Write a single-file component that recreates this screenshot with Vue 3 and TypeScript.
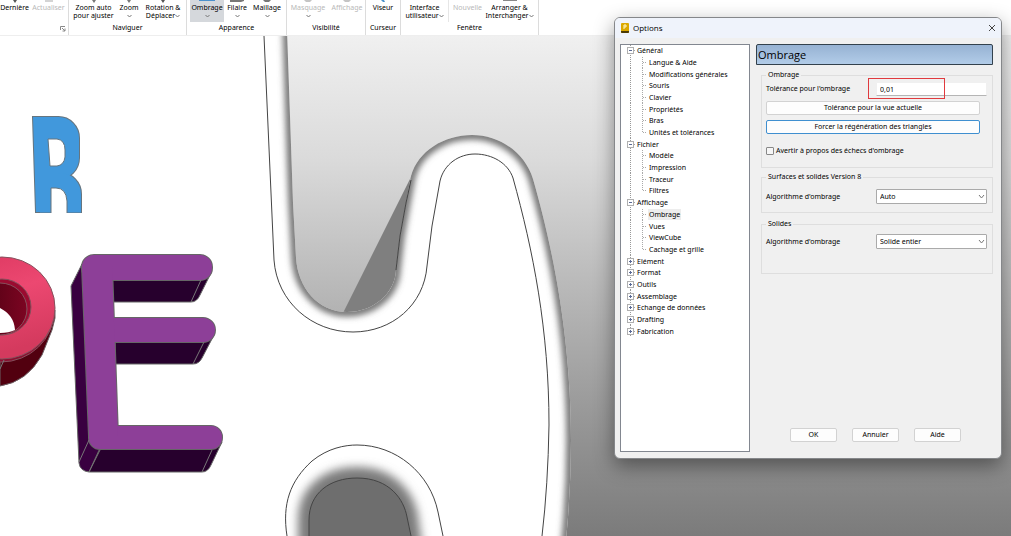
<script setup lang="ts">
import { ref } from 'vue'

interface Command {
  lines: string[]
  menu?: 'below' | 'inline'
  active?: boolean
  disabled?: boolean
  divider?: boolean
  icon: string
  tint: string
}
interface Group {
  id: string
  caption: string
  launcher?: boolean
  commands: Command[]
}
interface TreeNode {
  label: string
  child?: boolean
  open?: boolean
  last?: boolean
}

const arrow = 'M6 0h4l-2 3z'
const groups: Group[] = [
  {
    id: 'history', caption: '', launcher: true, commands: [
      { lines: ['Dernière'], icon: arrow, tint: '#555' },
      { lines: ['Actualiser'], disabled: true, icon: 'M4 0h8v2h-8z', tint: '#d4d4d4' },
    ],
  },
  {
    id: 'navigate', caption: 'Naviguer', commands: [
      { lines: ['Zoom auto', 'pour ajuster'], icon: arrow, tint: '#777' },
      { lines: ['Zoom'], menu: 'below', icon: arrow, tint: '#777' },
      { lines: ['Rotation &', 'Déplacer'], menu: 'inline', icon: arrow, tint: '#555' },
    ],
  },
  {
    id: 'look', caption: 'Apparence', commands: [
      { lines: ['Ombrage'], menu: 'below', active: true, icon: 'M0 0h16v1h-16z', tint: '#4b90cc' },
      { lines: ['Filaire'], menu: 'below', icon: 'M1 0h14v1l-3 1h-11z', tint: '#777' },
      { lines: ['Maillage'], menu: 'below', icon: 'M4 0h8l-2 2h-4z', tint: '#777' },
    ],
  },
  {
    id: 'visibility', caption: 'Visibilité', commands: [
      { lines: ['Masquage'], menu: 'below', disabled: true, icon: 'M4 0h8l-2 2h-4z', tint: '#c4c4c4' },
      { lines: ['Affichage'], disabled: true, icon: 'M4 0h8l-2 2h-4z', tint: '#c4c4c4' },
    ],
  },
  {
    id: 'cursor', caption: 'Curseur', commands: [
      { lines: ['Viseur'], icon: 'M6 0h3l1 2h-2z', tint: '#4b90cc' },
    ],
  },
  {
    id: 'window', caption: 'Fenêtre', commands: [
      { lines: ['Interface', 'utilisateur'], menu: 'inline', icon: '', tint: '#777' },
      { lines: ['Nouvelle'], disabled: true, divider: true, icon: '', tint: '#ccc' },
      { lines: ['Arranger &', 'Interchanger'], menu: 'inline', icon: 'M1 0h14v1h-14z', tint: '#888' },
    ],
  },
]

const tree: TreeNode[] = [
  { label: 'Général', open: true },
  { label: 'Langue & Aide', child: true },
  { label: 'Modifications générales', child: true },
  { label: 'Souris', child: true },
  { label: 'Clavier', child: true },
  { label: 'Propriétés', child: true },
  { label: 'Bras', child: true },
  { label: 'Unités et tolérances', child: true, last: true },
  { label: 'Fichier', open: true },
  { label: 'Modèle', child: true },
  { label: 'Impression', child: true },
  { label: 'Traceur', child: true },
  { label: 'Filtres', child: true, last: true },
  { label: 'Affichage', open: true },
  { label: 'Ombrage', child: true },
  { label: 'Vues', child: true },
  { label: 'ViewCube', child: true },
  { label: 'Cachage et grille', child: true, last: true },
  { label: 'Elément' },
  { label: 'Format' },
  { label: 'Outils' },
  { label: 'Assemblage' },
  { label: 'Echange de données' },
  { label: 'Drafting' },
  { label: 'Fabrication' },
]

const selected = ref('Ombrage')
const tolerance = ref('0,01')
const warn = ref(false)
const surfaceAlgo = ref('Auto')
const solidAlgo = ref('Solide entier')
</script>

<template>
  <div class="app">
    <header class="ribbon">
      <section v-for="g in groups" :key="g.id" class="group" :class="g.id">
        <div class="commands">
          <button
            v-for="c in g.commands"
            :key="c.lines[0]"
            type="button"
            class="command"
            :class="{ active: c.active, divider: c.divider }"
            :disabled="c.disabled"
          >
            <svg class="glyph" viewBox="0 0 16 4" aria-hidden="true"><path :d="c.icon" :fill="c.tint" /></svg>
            <span v-for="(line, i) in c.lines" :key="line" class="line">
              {{ line }}<svg v-if="c.menu === 'inline' && i === 1" class="chevron" viewBox="0 0 5 4"><path d="M.5 1l2 2 2-2" /></svg>
            </span>
            <svg v-if="c.menu === 'below'" class="chevron below" viewBox="0 0 5 4"><path d="M.5 1l2 2 2-2" /></svg>
          </button>
        </div>
        <div class="caption">
          <span>{{ g.caption }}</span>
          <svg v-if="g.launcher" class="launcher" viewBox="0 0 6 6"><path d="M.5 4V.5H5M2 2l3 3M5 2.500V5H2.500" /></svg>
        </div>
      </section>
    </header>

    <main class="view">
      <svg class="scene" viewBox="0 36 1011 500" preserveAspectRatio="xMinYMin slice" aria-hidden="true">
        <defs>
          <linearGradient id="sky" x1="0" y1="36" x2="0" y2="536" gradientUnits="userSpaceOnUse">
            <stop offset="0" stop-color="#f0f0f0" />
            <stop offset=".25" stop-color="#dadada" />
            <stop offset=".5" stop-color="#b9b9b9" />
            <stop offset=".75" stop-color="#999" />
            <stop offset="1" stop-color="#7b7b7b" />
          </linearGradient>
          <linearGradient id="pink" x1="0" y1="0" x2="0.300" y2="1">
            <stop offset="0" stop-color="#dc3860" />
            <stop offset=".45" stop-color="#ec4871" />
            <stop offset="1" stop-color="#d43a5e" />
          </linearGradient>
          <linearGradient id="maroon" x1="0" y1="0" x2="1" y2="0">
            <stop offset="0" stop-color="#4a0010" />
            <stop offset="1" stop-color="#7c0522" />
          </linearGradient>
          <filter id="soft" x="-20%" y="-20%" width="140%" height="140%"><feGaussianBlur stdDeviation="3" /></filter>
          <filter id="softer" x="-30%" y="-30%" width="160%" height="160%"><feGaussianBlur stdDeviation="5" /></filter>
          <clipPath id="solid">
            <path d="M0 30H287L290 116 293 203 296 258C298 288 318 312 347 312 374 312 395 293 396 270L400 236 406 203 411 176C418 151 444 135 472 135 500 135 525 153 533 179 550 238 571 330 571 440Q571 490 566 540H0z" />
          </clipPath>
          <clipPath id="baseline"><rect x="20" y="100" width="80" height="113" /></clipPath>
        </defs>

        <rect y="36" width="1011" height="500" fill="url(#sky)" />
        <path d="M343 313L411 177 406 215 400 250 396 280 380 305 350 318z" fill="#7f7f7f" />
        <g clip-path="url(#solid)">
          <rect y="30" width="600" height="510" fill="#fff" />
          <path
            d="M287 20L290 116 293 203 296 258C298 288 318 312 347 312 374 312 395 293 396 270L400 236 406 203 411 176C418 151 444 135 472 135 500 135 525 153 533 179 550 238 571 330 571 440Q571 500 564 560"
            fill="none" stroke="#6e6e6e" stroke-width="9" filter="url(#soft)"
          />
          <path d="M309 560V520C309 493 330 478 357 478 390 478 404 500 407 517L413 560z" fill="#707070" stroke="#7a7a7a" stroke-width="22" filter="url(#softer)" />
          <path d="M309 540V520C309 493 330 478 357 478 390 478 404 500 407 517L411 540z" fill="#6e6e6e" />
        </g>
        <g fill="none" stroke="#444" stroke-width="1">
          <path d="M264 36L274 260C277 302 312 332 353 332 392 332 424 305 427 266L432 226 440 181C444 164 459 154 475 154 492 154 508 163 513 178 533 250 549 330 549 425Q548 485 542 536" />
          <path d="M287 536C282 504 290 481 312 461 328 448 345 445 357 445 396 445 430 473 438 512L443 536" />
          <path d="M309 536V520C309 493 330 478 357 478 390 478 404 500 407 517L411 536" />
        </g>
        <path d="M396 270L400 236 406 203 411 180" fill="none" stroke="#444" />

        <!-- flat blue solid -->
        <g clip-path="url(#baseline)">
          <g fill="#4198dc" stroke="#66757f" stroke-width="2">
            <rect x="38" y="117" width="41" height="62" rx="21" />
            <rect x="40" y="173" width="41" height="70" rx="21" />
            <polygon points="33,117 58,117 52,212 36,212" />
          </g>
          <g fill="#4198dc">
            <rect x="38" y="117" width="41" height="62" rx="21" />
            <rect x="40" y="173" width="41" height="70" rx="21" />
            <polygon points="33,117 58,117 58,195 52,212 36,212" />
          </g>
          <path d="M48 139H57Q65 140 65 150V157Q64 165 57 166H50z" fill="#fff" stroke="#66757f" />
          <path d="M51 220V188H56Q66 188 67 201V220z" fill="#fff" stroke="#66757f" />
          <path d="M36 213H51M67 213H82" stroke="#66757f" />
        </g>

        <!-- red ring -->
        <path d="M0 350L55 310 55 318 52 330 42 355Q27 382 0 386z" fill="#52000f" stroke="#6b6064" />
        <ellipse cx="1" cy="311" rx="53" ry="51" fill="#8a1030" stroke="#85515d" />
        <ellipse cx="2" cy="308" rx="53" ry="51" fill="url(#pink)" stroke="#85515d" />
        <ellipse cx="2" cy="307" rx="29" ry="28" fill="#9b0b30" stroke="#85515d" />
        <ellipse cx="0" cy="309" rx="27" ry="26" fill="url(#maroon)" stroke="#85515d" />
        <path d="M0 308Q14 315 15 330Q9 333 0 333z" fill="#fff" />
        <path d="M4 360L0 369" stroke="#777" />

        <!-- extruded purple solid -->
        <g stroke="#666" stroke-width="1" stroke-linejoin="round">
          <path d="M82 264L71 286 79 463Q80 471 89 472L104 446z" fill="#390040" />
          <path d="M100 448L89 472H202Q208 472 211 465L222 442z" fill="#27002d" />
          <path d="M112 278V302H191Q197 302 200 295L211 273z" fill="#27002d" />
          <path d="M115 340V364H193Q199 364 202 358L214 335z" fill="#27002d" />
        </g>
        <g fill="#8d3f98" stroke="#666" stroke-width="2">
          <rect x="82" y="255" width="130" height="25" rx="12" />
          <rect x="90" y="318" width="125" height="24" rx="12" />
          <rect x="89" y="426" width="133" height="23" rx="11" />
          <polygon points="82,266 112,266 118,436 89,436" />
        </g>
        <g fill="#8d3f98">
          <rect x="82" y="255" width="130" height="25" rx="12" />
          <rect x="90" y="318" width="125" height="24" rx="12" />
          <rect x="89" y="426" width="133" height="23" rx="11" />
          <polygon points="82,266 112,266 118,436 89,436" />
        </g>
        <path d="M100 450L89 472M89 440L79 462M212 450L202 472M201 280L191 302M204 342L193 364" stroke="#777" fill="none" />
      </svg>
    </main>

    <div class="dialog" role="dialog" aria-labelledby="dialog-title">
      <div class="titlebar">
        <svg class="logo" viewBox="0 0 10 10" aria-hidden="true">
          <path d="M1 1q0-1 1-1h6q1 0 1 1v8q0 1-1 1H2q-1 0-1-1z" fill="#dba800" />
          <path d="M1 8h8v1q0 1-1 1H2q-1 0-1-1z" fill="#4c3a05" />
          <path d="M4 6V2h2v2H4" fill="none" stroke="#fff6c8" />
        </svg>
        <span id="dialog-title">Options</span>
        <button type="button" class="close" aria-label="Fermer">
          <svg viewBox="0 0 8 8"><path d="M1 1l6 6M7 1l-6 6" /></svg>
        </button>
      </div>
      <div class="body">
        <nav class="tree" aria-label="Catégories">
          <ul>
            <li v-for="n in tree" :key="n.label + n.child" :class="{ child: n.child, last: n.last }">
              <span class="trunk">
                <svg v-if="!n.child" class="toggle" viewBox="0 0 7 7">
                  <rect x=".5" y=".5" width="6" height="6" />
                  <path :d="n.open ? 'M2 3.500h3' : 'M2 3.500h3M3.500 2v3'" />
                </svg>
              </span>
              <span v-if="n.child" class="branch"></span>
              <button
                type="button"
                class="node"
                :class="{ selected: n.child && n.label === selected }"
                @click="selected = n.label"
              >{{ n.label }}</button>
            </li>
          </ul>
        </nav>
        <form class="panel" @submit.prevent>
          <h1>Ombrage</h1>
          <fieldset class="shading">
            <legend>Ombrage</legend>
            <div class="field">
              <label for="tolerance">Tolérance pour l'ombrage</label>
              <span class="control">
                <input id="tolerance" v-model="tolerance" type="text" />
                <span class="marker"></span>
              </span>
            </div>
            <button type="button" class="wide">Tolérance pour la vue actuelle</button>
            <button type="button" class="wide focus">Forcer la régénération des triangles</button>
            <label class="check"><input v-model="warn" type="checkbox" />Avertir à propos des échecs d'ombrage</label>
          </fieldset>
          <fieldset class="surfaces">
            <legend>Surfaces et solides Version 8</legend>
            <div class="field">
              <label for="surface-algo">Algorithme d'ombrage</label>
              <span class="control">
                <select id="surface-algo" v-model="surfaceAlgo"><option>Auto</option></select>
                <svg class="drop" viewBox="0 0 7 5"><path d="M1 1l2.500 3L6 1" /></svg>
              </span>
            </div>
          </fieldset>
          <fieldset class="solids">
            <legend>Solides</legend>
            <div class="field">
              <label for="solid-algo">Algorithme d'ombrage</label>
              <span class="control">
                <select id="solid-algo" v-model="solidAlgo"><option>Solide entier</option></select>
                <svg class="drop" viewBox="0 0 7 5"><path d="M1 1l2.500 3L6 1" /></svg>
              </span>
            </div>
          </fieldset>
          <div class="actions">
            <button type="submit">OK</button>
            <button type="button">Annuler</button>
            <button type="button">Aide</button>
          </div>
        </form>
      </div>
    </div>
  </div>
</template>

<style>
body { margin: 0; }
</style>

<style scoped>
* { box-sizing: border-box; }
.app {
  position: relative;
  display: flex;
  flex-direction: column;
  height: 100vh;
  overflow: hidden;
  background: #fff;
  color: #000;
  font-family: "Noto Sans", "Open Sans", sans-serif;
  font-size: 7px;
  line-height: 8px;
}
button, input, select { font: inherit; color: inherit; margin: 0; }
svg { display: block; }

.ribbon {
  display: flex;
  height: 36px;
  flex: none;
  background: #fff;
  border-bottom: 1px solid #eee;
}
.group {
  display: flex;
  flex-direction: column;
  border-right: 1px solid #dcdcdc;
}
.commands { display: grid; height: 22px; }
.history .commands { grid-template-columns: 29px 39px; }
.navigate .commands { grid-template-columns: 43px 28px 40px; padding: 0 3px; }
.look .commands { grid-template-columns: 34px 26px 34px; padding: 0 2px 0 3px; }
.visibility .commands { grid-template-columns: 42px 36px; }
.cursor .commands { grid-template-columns: 34px; }
.window .commands { grid-template-columns: 47px 38px 47px; padding-right: 5px; }
.command {
  display: flex;
  flex-direction: column;
  align-items: center;
  padding: 0;
  border: 0;
  background: none;
  white-space: nowrap;
  line-height: 8px;
}
.command:disabled { color: #b8b8b8; }
.command.active { background: #d5d8dc; }
.command.divider { border-left: 1px solid #e6e6e6; }
.glyph { flex: none; width: 16px; height: 4px; }
.line { display: flex; align-items: center; }
.chevron { width: 5px; height: 4px; fill: none; stroke: #777; }
.below { margin-top: 2px; }
.caption {
  position: relative;
  height: 12px;
  line-height: 12px;
  text-align: center;
}
.launcher {
  position: absolute;
  right: 2px;
  bottom: 2px;
  width: 6px;
  height: 6px;
  fill: none;
  stroke: #888;
}

.view { flex: 1; min-height: 0; }
.scene { width: 100%; height: 100%; }

.dialog {
  position: absolute;
  top: 17px;
  right: 9px;
  width: 388px;
  border: 1px solid #85878a;
  border-radius: 6px;
  background: #f0f0f0;
  box-shadow: 0 7px 20px rgba(0, 0, 0, .42);
}
.titlebar {
  display: flex;
  align-items: center;
  gap: 3px;
  height: 20px;
  padding: 0 5px;
  border-radius: 5px 5px 0 0;
  background: #eff3fb;
  font-family: "Open Sans", "Noto Sans", sans-serif;
  font-size: 8px;
}
.logo { width: 10px; height: 10px; }
.close { margin-left: auto; padding: 0; border: 0; background: none; }
.close svg { width: 8px; height: 8px; fill: none; stroke: #444; }
.body {
  display: flex;
  gap: 6px;
  padding: 6px 8px 6px 5px;
}
.tree {
  flex: none;
  width: 130px;
  min-height: 408px;
  border: 1px solid #828790;
  background: #fff;
}
.tree ul {
  display: grid;
  grid-auto-rows: 1fr;
  height: 292px;
  margin: 0;
  padding: 0 0 0 6px;
  list-style: none;
}
.tree li { display: flex; align-items: stretch; min-height: 0; }
.trunk {
  display: flex;
  align-items: center;
  width: 9px;
  background:
    repeating-linear-gradient(#999 0 1px, transparent 1px 2px) 3px 0 / 1px 100% no-repeat,
    repeating-linear-gradient(90deg, #aaa 0 1px, transparent 1px 2px) 7px 50% / 3px 1px no-repeat;
}
.child .trunk { background: repeating-linear-gradient(#999 0 1px, transparent 1px 2px) 3px 0 / 1px 100% no-repeat; }
.branch {
  width: 12px;
  background:
    repeating-linear-gradient(#aaa 0 1px, transparent 1px 2px) 6px 0 / 1px 100% no-repeat,
    repeating-linear-gradient(90deg, #aaa 0 1px, transparent 1px 2px) 7px 50% / 4px 1px no-repeat;
}
.last .branch { background-size: 1px 50%, 4px 1px; }
.toggle { width: 7px; height: 7px; }
.toggle rect { fill: #fff; stroke: #b0b0b0; }
.toggle path { stroke: #5a6a96; }
.node {
  align-self: center;
  padding: 0 1px;
  border: 0;
  background: none;
  line-height: 11px;
  white-space: nowrap;
}
.node.selected { background: #ededed; }

.panel { flex: 1; display: flex; flex-direction: column; min-width: 0; }
h1 {
  height: 21px;
  margin: 0 0 5px;
  padding: 0 1px;
  border: 1px solid #33414c;
  border-radius: 2px 2px 0 0;
  background: linear-gradient(#96b2d3, #b2cce8);
  font-family: "Open Sans", "Noto Sans", sans-serif;
  font-size: 11px;
  font-weight: 400;
  line-height: 20px;
}
fieldset {
  display: flex;
  flex-direction: column;
  min-width: 0;
  margin: 0 0 0 5px;
  border: 1px solid #dedede;
}
legend { padding: 0 2px; line-height: 10px; }
.shading { padding: 2px 5px 11px 4px; }
.surfaces { margin-top: 4px; padding: 7px 5px 8px 4px; }
.solids { margin-top: 6px; padding: 5px 5px 24px 4px; }
.field { display: flex; align-items: center; justify-content: space-between; }
.control { position: relative; flex: none; width: 111px; }
.control input, .control select {
  display: block;
  width: 100%;
  height: 15px;
  padding: 0 3px;
  border: 1px solid #aaa;
  border-radius: 1px;
  background: #fff;
  appearance: none;
  outline: 0;
}
.control input { height: 14px; border-color: #f0f0f0 #f0f0f0 #b5b5b5; }
.marker {
  position: absolute;
  top: -4px;
  left: -8px;
  width: 77px;
  height: 21px;
  border: 1px solid #e03a3e;
  pointer-events: none;
}
.drop {
  position: absolute;
  top: 5px;
  right: 2px;
  width: 7px;
  height: 5px;
  fill: none;
  stroke: #777;
  pointer-events: none;
}
.wide, .actions button {
  height: 14px;
  padding: 0;
  border: 1px solid #d2d2d2;
  border-radius: 2px;
  background: #fdfdfd;
}
.wide { margin: 5px 7px 0 0; }
.wide.focus { border-color: #3f8fd0; }
.check { display: flex; align-items: center; gap: 2px; height: 10px; margin-top: 12px; }
.check input {
  width: 8px;
  height: 8px;
  border: 1px solid #888;
  border-radius: 1px;
  background: #f6f6f6;
  appearance: none;
}
.check input:checked { background: #3f8fd0; }
.actions {
  display: flex;
  justify-content: flex-end;
  gap: 15px;
  margin-top: auto;
  padding: 0 32px 10px 0;
}
.actions button { width: 47px; }
</style>
